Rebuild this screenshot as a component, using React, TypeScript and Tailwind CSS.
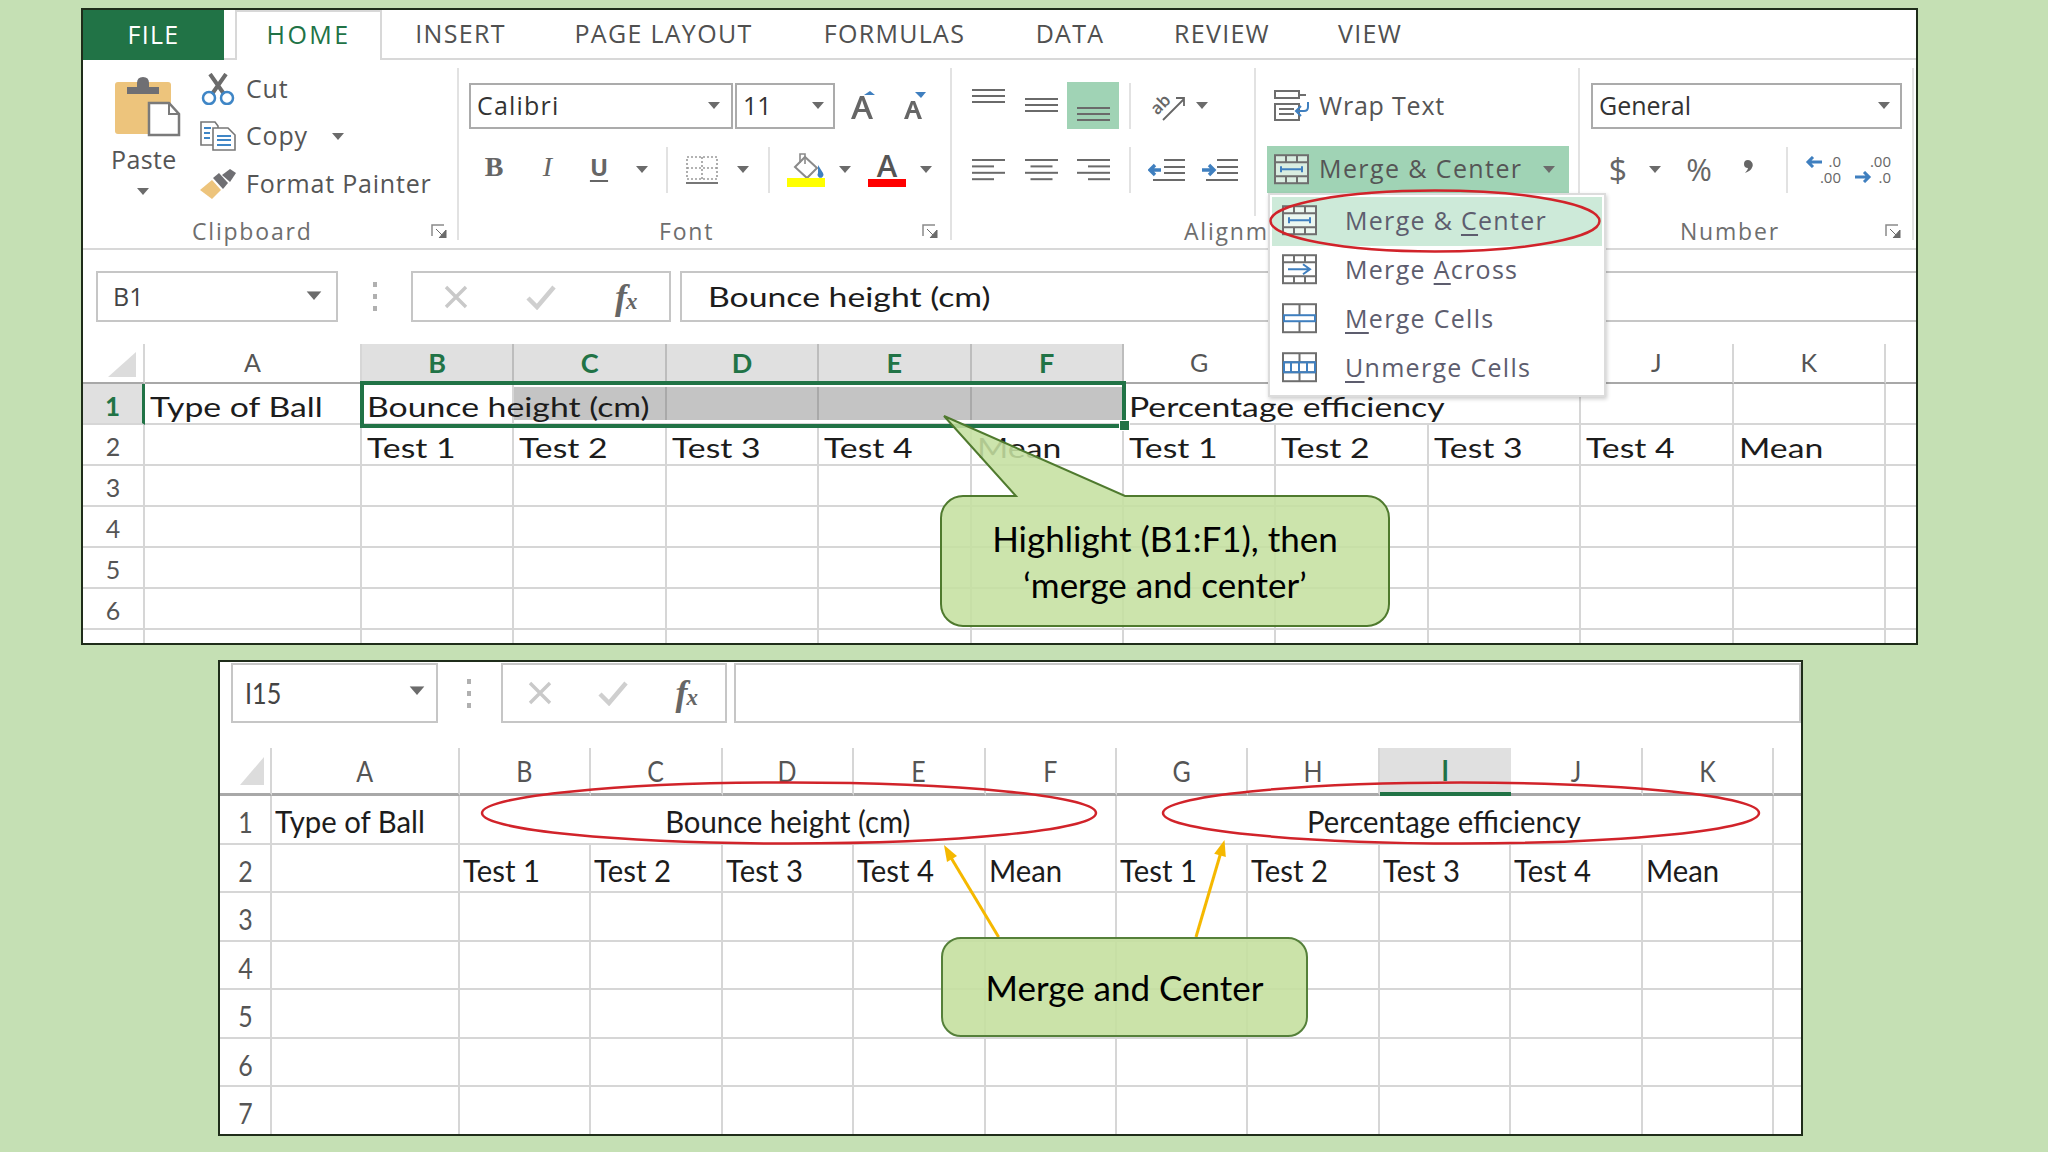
const COLS = ['A', 'B', 'C', 'D', 'E', 'F', 'G', 'H', 'I', 'J', 'K'];
const TESTS = ['Test 1', 'Test 2', 'Test 3', 'Test 4', 'Mean'];

function Caret({ className = '' }: { className?: string }) {
  return (
    <svg width="12" height="7" viewBox="0 0 12 7" className={className}>
      <path d="M0 0h12L6 7z" fill="#6b6b6b" />
    </svg>
  );
}

function Sep() {
  return <div className="w-[2px] h-[46px] bg-[#e2e2e2]" />;
}

function Launcher() {
  return (
    <svg width="16" height="14" viewBox="0 0 16 14">
      <path d="M1 12V1h12" fill="none" stroke="#8a8a8a" strokeWidth="1.5" />
      <path d="M5 5l6 6M15 6v8H8z" fill="#6b6b6b" stroke="#6b6b6b" />
    </svg>
  );
}

function Lines({ y, widths = [33, 33, 33], gap = 6 }: { y: number; widths?: number[]; gap?: number }) {
  return (
    <>
      {widths.map((w, i) => (
        <rect key={i} x={33 - w} y={y + i * gap} width={w} height="2" fill="#6a6a6a" />
      ))}
    </>
  );
}

function AlignLines({ mode }: { mode: 'left' | 'center' | 'right' }) {
  const rows = [33, 22, 33, 22];
  const x = (w: number) => (mode === 'left' ? 0 : mode === 'center' ? (33 - w) / 2 : 33 - w);
  return (
    <svg width="33" height="22" viewBox="0 0 33 22">
      {rows.map((w, i) => (
        <rect key={i} x={x(w)} y={i * 6.4} width={w} height="2" fill="#6a6a6a" />
      ))}
    </svg>
  );
}

function MergeIcon({ kind, size = 35 }: { kind: 'center' | 'across' | 'cells' | 'unmerge'; size?: number }) {
  const blue = '#3f7fbf';
  const gray = '#6e6e6e';
  return (
    <svg width={size} height={size * 0.87} viewBox="0 0 35 30" fill="none">
      <rect x="1" y="1" width="33" height="28" stroke={gray} strokeWidth="2" fill="#fff" fillOpacity="0.6" />
      {kind === 'center' || kind === 'across' ? (
        <>
          <path d="M1 8h33M1 22h33M12 1v7M23 1v7M12 22v7M23 22v7" stroke={gray} strokeWidth="2" />
          {kind === 'center' ? (
            <path d="M7 15h21M7 12v6M28 12v6" stroke={blue} strokeWidth="2" />
          ) : (
            <path d="M6 15h22M21 10l7 5-7 5" stroke={blue} strokeWidth="2" />
          )}
        </>
      ) : kind === 'cells' ? (
        <>
          <path d="M17.5 1v28" stroke={gray} strokeWidth="2" />
          <rect x="2" y="12" width="31" height="6" fill="#fff" stroke={blue} strokeWidth="2" />
        </>
      ) : (
        <>
          <path d="M1 10h33M1 20h33M17.5 1v9M17.5 20v9" stroke={gray} strokeWidth="2" />
          <path d="M2 10h31v10H2zM9 10v10M17 10v10M25 10v10" stroke={blue} strokeWidth="2" />
        </>
      )}
    </svg>
  );
}

function PasteIcon() {
  return (
    <svg width="66" height="62" viewBox="0 0 66 62">
      <rect x="0" y="7" width="56" height="52" rx="3" fill="#edc47c" />
      <path d="M12 19v-7h10V8q0-6 6-6t6 6v4h10v7z" fill="#6f6f73" />
      <path d="M34 28h20l10 11v21H34z" fill="#fff" stroke="#7a7a7a" strokeWidth="2.5" />
      <path d="M54 28v11h10" fill="none" stroke="#7a7a7a" strokeWidth="2" />
    </svg>
  );
}

function CutIcon() {
  return (
    <svg width="36" height="32" viewBox="0 0 36 32" fill="none">
      <path d="M10 1l14 20M26 1L12 21" stroke="#6b6b6b" strokeWidth="4" />
      <circle cx="9" cy="25" r="6" stroke="#3f86c6" strokeWidth="2.5" />
      <circle cx="27" cy="25" r="6" stroke="#3f86c6" strokeWidth="2.5" />
    </svg>
  );
}

function CopyIcon() {
  return (
    <svg width="36" height="30" viewBox="0 0 36 30" fill="none">
      <path d="M1 1h14l3 4v19H1z" fill="#fff" stroke="#777" strokeWidth="1.6" />
      <path d="M13 7h15l7 7v15H13z" fill="#fff" stroke="#777" strokeWidth="1.6" />
      <path d="M4 7h7M4 12h6M4 17h6M17 15h14M17 19h14M17 24h14" stroke="#3f86c6" strokeWidth="2" />
    </svg>
  );
}

function PainterIcon() {
  return (
    <svg width="38" height="30" viewBox="0 0 38 30">
      <path d="M0 21l12-10 9 10-9 9z" fill="#edc47c" />
      <path d="M13 9l6-5 9 10-5 6z" fill="#6f6f73" />
      <path d="M22 6l8-6 6 4-6 9z" fill="#6f6f73" />
    </svg>
  );
}

function WrapIcon() {
  return (
    <svg width="37" height="31" viewBox="0 0 37 31" fill="none">
      <path d="M1 1h24v7H1zM1 14h24v16H1z" stroke="#6e6e6e" strokeWidth="2" />
      <path d="M25 5h7M5 19h15M5 24h15" stroke="#6e6e6e" strokeWidth="2" />
      <path d="M34 12v5q0 4-4 4h-7M27 16l-5 5 5 5" stroke="#3f7fbf" strokeWidth="2" />
    </svg>
  );
}

function OrientIcon() {
  return (
    <svg width="38" height="30" viewBox="0 0 38 30" fill="none" className="overflow-visible">
      <text x="14" y="19" textAnchor="middle" transform="rotate(-45 14 14)" fontFamily="Open Sans, sans-serif" fontSize="17" fontWeight="600" fill="#666">
        ab
      </text>
      <path d="M16 29L37 8M29 7h8v8" stroke="#666" strokeWidth="1.8" />
    </svg>
  );
}

function IndentIcon({ more }: { more?: boolean }) {
  return (
    <svg width="38" height="24" viewBox="0 0 38 24" fill="none">
      <path d="M16 2h21M16 9h21M16 15h21M5 22h32" stroke="#6a6a6a" strokeWidth="2" />
      {more ? (
        <path d="M1 12h11M8 7l5 5-5 5" stroke="#3f7fbf" strokeWidth="3.4" />
      ) : (
        <path d="M13 12H2M7 7l-5 5 5 5" stroke="#3f7fbf" strokeWidth="3.4" />
      )}
    </svg>
  );
}

function DecimalIcon({ more }: { more?: boolean }) {
  return (
    <div className="relative w-[36px] h-[31px] text-[#666] text-[15px] leading-[15px] font-['Open_Sans',sans-serif]">
      <span className="absolute right-0 top-0">{more ? '.00' : '.0'}</span>
      <span className="absolute right-0 bottom-0">{more ? '.0' : '.00'}</span>
      <svg width="17" height="12" viewBox="0 0 17 12" fill="none" className={more ? 'absolute left-0 bottom-[2px]' : 'absolute left-0 top-[2px]'}>
        {more ? (
          <path d="M0 6h14M9 1l5 5-5 5" stroke="#3f7fbf" strokeWidth="3" />
        ) : (
          <path d="M17 6H3M8 1L3 6l5 5" stroke="#3f7fbf" strokeWidth="3" />
        )}
      </svg>
    </div>
  );
}

function FormulaGlyphs({ widths }: { widths: string[] }) {
  return (
    <>
      <div className={`${widths[0]} flex justify-center`}>
        <svg width="24" height="24" viewBox="0 0 24 24" fill="none">
          <path d="M2 2l20 20M22 2L2 22" stroke="#c9c9c9" strokeWidth="3.4" />
        </svg>
      </div>
      <div className={`${widths[1]} flex justify-center`}>
        <svg width="30" height="26" viewBox="0 0 30 26" fill="none">
          <path d="M2 14l9 9L28 3" stroke="#cfcfcf" strokeWidth="4.5" />
        </svg>
      </div>
      <div className={`${widths[2]} flex justify-center items-baseline font-['Liberation_Serif',serif] italic font-bold text-[#666] leading-none`}>
        <span className="text-[36px]">f</span>
        <span className="text-[23px] -ml-[1px]">x</span>
      </div>
    </>
  );
}

function Dots() {
  return (
    <div className="flex flex-col gap-[7px]">
      <div className="w-[4px] h-[5px] bg-[#b0b0b0]" />
      <div className="w-[4px] h-[5px] bg-[#b0b0b0]" />
      <div className="w-[4px] h-[5px] bg-[#b0b0b0]" />
    </div>
  );
}

function GroupLabel({ name, left, launcherRight }: { name: string; left: string; launcherRight?: string }) {
  return (
    <div className="mt-auto h-[18px] flex items-center">
      <span className={`${left} text-[23px] leading-[18px] tracking-[1.8px] text-[#6e6e6e] whitespace-nowrap`}>{name}</span>
      {launcherRight && (
        <div className={`ml-auto ${launcherRight}`}>
          <Launcher />
        </div>
      )}
    </div>
  );
}

function Ribbon() {
  return (
    <div className="flex h-[190px] border-b-2 border-[#d8d8d8] py-[8px]">
      <div className="w-[376px] border-r-2 border-[#e2e2e2] flex flex-col">
        <div className="flex">
          <div className="w-[117px] pl-[32px] pt-[7px] flex flex-col">
            <PasteIcon />
            <span className="text-[25px] leading-[30px] mt-[7px] -ml-[4px] tracking-[0.4px] text-[#555]">Paste</span>
            <Caret className="mt-[14px] ml-[22px]" />
          </div>
          <div className="flex flex-col -mt-[3px] text-[25px] tracking-[0.8px] text-[#555]">
            <div className="h-[47px] flex items-center">
              <div className="w-[46px]"><CutIcon /></div>
              <span>Cut</span>
            </div>
            <div className="h-[48px] flex items-center">
              <div className="w-[46px]"><CopyIcon /></div>
              <span>Copy</span>
              <Caret className="ml-[24px]" />
            </div>
            <div className="h-[47px] flex items-center">
              <div className="w-[46px]"><PainterIcon /></div>
              <span className="whitespace-nowrap">Format Painter</span>
            </div>
          </div>
        </div>
        <GroupLabel name="Clipboard" left="ml-[109px]" launcherRight="mr-[10px]" />
      </div>

      <div className="w-[493px] border-r-2 border-[#e2e2e2] flex flex-col pl-[10px] pt-[14px]">
        <div className="flex items-center h-[47px]">
          <div className="w-[264px] h-[46px] border-2 border-[#ababab] flex items-center pl-[6px] pr-[11px] justify-between text-[25px] tracking-[1.2px] text-[#333]">
            <span>Calibri</span>
            <Caret />
          </div>
          <div className="ml-[2px] w-[100px] h-[46px] border-2 border-[#ababab] flex items-center pl-[6px] pr-[9px] justify-between text-[25px] text-[#333]">
            <span>11</span>
            <Caret />
          </div>
          <svg width="24" height="30" viewBox="0 0 24 30" className="ml-[16px]">
            <path d="M0 28L9 5h4l9 23h-4l-3-7H7l-3 7zM8 18h6l-3-9z" fill="#666" fillRule="evenodd" />
            <path d="M13 4l6-4 5 4z" fill="#3f7fbf" />
          </svg>
          <svg width="22" height="28" viewBox="0 0 22 28" className="ml-[29px]">
            <path d="M0 27L7 9h4l7 18h-4l-2-6H6l-2 6zM7 18h4L9 12z" fill="#666" fillRule="evenodd" />
            <path d="M11 0h11l-5 6z" fill="#3f7fbf" />
          </svg>
        </div>
        <div className="flex items-center h-[47px] mt-[17px] text-[#666]">
          <div className="w-[50px] -mt-[5px] flex justify-center font-['Liberation_Serif',serif] font-bold text-[28px]">B</div>
          <div className="w-[51px] ml-[3px] -mt-[5px] flex justify-center font-['Liberation_Serif',serif] italic text-[28px]">I</div>
          <div className="w-[48px] ml-[2px] -mt-[5px] flex justify-center font-['Open_Sans',sans-serif] font-bold text-[24px] underline underline-offset-4">U</div>
          <div className="w-[38px] flex justify-center"><Caret /></div>
          <div className="w-[12px] flex justify-center"><Sep /></div>
          <div className="w-[58px] flex justify-center">
            <svg width="32" height="28" viewBox="0 0 32 28" fill="none">
              <path d="M1 1h30v22H1zM16 1v22M1 12h30" stroke="#9a9a9a" strokeWidth="1.6" strokeDasharray="2 2" />
              <path d="M0 27h32" stroke="#777" strokeWidth="2" />
            </svg>
          </div>
          <div className="w-[24px] flex justify-center"><Caret /></div>
          <div className="w-[28px] flex justify-center"><Sep /></div>
          <div className="w-[46px] flex justify-center">
            <svg width="38" height="34" viewBox="0 0 38 34" fill="none">
              <path d="M8 14L18 4l12 11-10 10z" stroke="#8a8a8a" strokeWidth="2" />
              <path d="M13 10V1h5v10" stroke="#8a8a8a" strokeWidth="1.6" />
              <path d="M31 12l5 8a3 3 0 1 1-5 0z" fill="#3f7fbf" />
              <rect x="0" y="25" width="38" height="9" fill="#ffff00" />
            </svg>
          </div>
          <div className="w-[32px] flex justify-center"><Caret /></div>
          <div className="w-[52px] flex flex-col items-center">
            <span className="text-[31px] leading-[27px] font-semibold text-[#555]">A</span>
            <div className="w-[38px] h-[8px] bg-[#ff0000]" />
          </div>
          <div className="w-[26px] flex justify-center"><Caret /></div>
        </div>
        <GroupLabel name="Font" left="ml-[190px]" launcherRight="mr-[12px]" />
      </div>

      <div className="w-[628px] border-r-2 border-[#e2e2e2] flex flex-col">
        <div className="flex flex-1">
          <div className="w-[304px] border-r-2 border-[#e2e2e2] pl-[10px] pt-[14px] mb-[6px]">
            <div className="flex items-center h-[47px]">
              <div className="w-[53px] flex justify-center self-start pt-[7px]">
                <svg width="33" height="15"><Lines y={0} /></svg>
              </div>
              <div className="w-[52px] flex justify-center">
                <svg width="33" height="15"><Lines y={0} /></svg>
              </div>
              <div className="w-[52px] h-[47px] bg-[#a0d3b5] flex justify-center items-end pb-[7px]">
                <svg width="33" height="15"><Lines y={0} /></svg>
              </div>
              <div className="w-[22px] flex justify-center"><Sep /></div>
              <div className="w-[50px] flex justify-center"><OrientIcon /></div>
              <div className="w-[22px] flex justify-center"><Caret /></div>
            </div>
            <div className="flex items-center h-[47px] mt-[17px]">
              <div className="w-[53px] flex justify-center"><AlignLines mode="left" /></div>
              <div className="w-[52px] flex justify-center"><AlignLines mode="center" /></div>
              <div className="w-[52px] flex justify-center"><AlignLines mode="right" /></div>
              <div className="w-[22px] flex justify-center"><Sep /></div>
              <div className="w-[52px] flex justify-center"><IndentIcon /></div>
              <div className="w-[54px] flex justify-center"><IndentIcon more /></div>
            </div>
          </div>
          <div className="pt-[14px] text-[25px] text-[#555]">
            <div className="flex items-center h-[47px] pl-[18px]">
              <WrapIcon />
              <span className="ml-[8px] tracking-[0.8px] whitespace-nowrap">Wrap Text</span>
            </div>
            <div className="ml-[11px] mt-[17px] w-[302px] h-[47px] bg-[#a0d3b5] flex items-center pl-[7px]">
              <MergeIcon kind="center" />
              <span className="ml-[10px] -mt-[2px] tracking-[1.4px] whitespace-nowrap">Merge &amp; Center</span>
              <Caret className="ml-[21px]" />
            </div>
          </div>
        </div>
        <GroupLabel name="Alignment" left="ml-[232px]" />
      </div>

      <div className="w-[334px] border-r-2 border-[#e2e2e2] flex flex-col pl-[11px] pt-[14px]">
        <div className="h-[47px] flex items-center">
          <div className="w-[311px] h-[46px] border-2 border-[#ababab] flex items-center pl-[6px] pr-[10px] justify-between text-[25px] text-[#333]">
            <span>General</span>
            <Caret />
          </div>
        </div>
        <div className="flex items-center h-[47px] mt-[17px] text-[#666]">
          <div className="w-[54px] flex justify-center text-[32px] leading-none">$</div>
          <div className="w-[20px] flex justify-center"><Caret /></div>
          <div className="w-[68px] flex justify-center text-[31px] leading-none">%</div>
          <div className="w-[30px] flex justify-center -mt-[6px]">
            <svg width="10" height="13" viewBox="0 0 10 13">
              <path d="M5 0a5 5 0 0 1 4.5 6.5Q8 11 2 13q3-3 3-5a4 4 0 0 1 0-8z" fill="#666" />
            </svg>
          </div>
          <div className="w-[37px] flex justify-end pr-[12px]"><Sep /></div>
          <div className="w-[46px] flex justify-center"><DecimalIcon /></div>
          <div className="w-[54px] flex justify-center"><DecimalIcon more /></div>
        </div>
        <GroupLabel name="Number" left="ml-[89px]" launcherRight="mr-[11px]" />
      </div>
    </div>
  );
}

function MergeMenu() {
  return (
    <div className="absolute left-[1185px] top-[183px] w-[338px] h-[204px] bg-white border-2 border-[#dcdcdc] shadow-[1px_2px_4px_rgba(0,0,0,0.2)] pt-[2px] px-[2px] text-[25px] tracking-[1.3px] text-[#5d5d6e]">
      <div className="h-[49px] bg-[#cdead9] flex items-center pl-[10px] pb-[2px]">
        <MergeIcon kind="center" />
        <span className="ml-[28px] whitespace-nowrap">Merge &amp; <span className="underline underline-offset-4">C</span>enter</span>
      </div>
      <div className="h-[49px] flex items-center pl-[10px] pb-[2px]">
        <MergeIcon kind="across" />
        <span className="ml-[28px] whitespace-nowrap">Merge <span className="underline underline-offset-4">A</span>cross</span>
      </div>
      <div className="h-[49px] flex items-center pl-[10px] pb-[2px]">
        <MergeIcon kind="cells" />
        <span className="ml-[28px] whitespace-nowrap"><span className="underline underline-offset-4">M</span>erge Cells</span>
      </div>
      <div className="h-[49px] flex items-center pl-[10px] pb-[2px]">
        <MergeIcon kind="unmerge" />
        <span className="ml-[28px] whitespace-nowrap"><span className="underline underline-offset-4">U</span>nmerge Cells</span>
      </div>
    </div>
  );
}

function TopCell({ children, className = '' }: { children?: React.ReactNode; className?: string }) {
  return <div className={`border-r-2 border-b-2 border-[#d6d6d6] flex items-center pt-[5px] ${className}`}>{children}</div>;
}

function TopText({ children }: { children: React.ReactNode }) {
  return (
    <span className="inline-block pl-[4px] origin-left scale-x-[1.25] whitespace-nowrap text-[27px] leading-none text-[#1c1c1c] font-['Lato',sans-serif]">
      {children}
    </span>
  );
}

function TopSheet() {
  const selected = (c: string) => 'BCDEF'.includes(c);
  // H and I sit behind the open merge menu
  const hidden = (c: string) => 'HI'.includes(c);
  return (
    <div className="mt-[22px] grid grid-cols-[62px_217px_repeat(10,152.4px)_1fr] grid-rows-[40px_repeat(7,41px)] font-['Lato',sans-serif]">
      <div className="border-r-2 border-b-2 border-b-[#a8a8a8] border-r-[#d6d6d6] flex justify-end items-end pr-[7px] pb-[5px]">
        <svg width="28" height="25"><path d="M28 0v25H0z" fill="#dcdcdc" /></svg>
      </div>
      {COLS.map((c) => (
        <div
          key={c}
          className={
            selected(c)
              ? 'border-r-2 border-b-2 border-r-[#bdbdbd] border-b-[#a8a8a8] bg-[#e0e0e0] flex items-center justify-center text-[27px] font-bold text-[#217346]'
              : 'border-r-2 border-b-2 border-r-[#d6d6d6] border-b-[#a8a8a8] flex items-center justify-center text-[25px] text-[#555]'
          }
        >
          {hidden(c) ? '' : c}
        </div>
      ))}
      <div className="border-b-2 border-[#a8a8a8]" />

      <div className="border-b-2 border-[#d6d6d6] bg-[#e0e0e0] border-r-[3px] border-r-[#217346] flex items-center justify-center pt-[5px] text-[26px] font-bold text-[#217346]">1</div>
      <TopCell><TopText>Type of Ball</TopText></TopCell>
      <TopCell className="relative z-10"><TopText>Bounce height (cm)</TopText></TopCell>
      {['C', 'D', 'E', 'F'].map((c) => (
        <div key={c} className="border-b-2 border-[#d6d6d6] pt-[3px] pb-[3px]">
          <div className="h-full bg-[#c4c4c4] border-r-2 border-[#a9a9a9]" />
        </div>
      ))}
      <div className="col-span-3 border-r-2 border-b-2 border-[#d6d6d6] flex items-center pt-[5px]"><TopText>Percentage efficiency</TopText></div>
      <TopCell />
      <TopCell />
      <div className="border-b-2 border-[#d6d6d6]" />

      <TopCell className="justify-center text-[25px] text-[#555]">2</TopCell>
      <TopCell />
      {[...TESTS, ...TESTS].map((t, i) => (
        <TopCell key={i}><TopText>{t}</TopText></TopCell>
      ))}
      <div className="border-b-2 border-[#d6d6d6]" />

      {[3, 4, 5, 6, 7].map((r) => (
        <div key={r} className="contents">
          <TopCell className="justify-center text-[25px] text-[#555]">{r === 7 ? '' : r}</TopCell>
          {COLS.map((c) => (
            <TopCell key={c} />
          ))}
          <div className="border-b-2 border-[#d6d6d6]" />
        </div>
      ))}
    </div>
  );
}

function TopPanel() {
  const tabs = [
    { name: 'INSERT', w: 'w-[157px]' },
    { name: 'PAGE LAYOUT', w: 'w-[249px]' },
    { name: 'FORMULAS', w: 'w-[213px]' },
    { name: 'DATA', w: 'w-[138px]' },
    { name: 'REVIEW', w: 'w-[166px]' },
    { name: 'VIEW', w: 'w-[130px]' },
  ];
  return (
    <div className="ml-[81px] w-[1837px] h-[637px] border-2 border-[#1f2d1a] bg-white relative overflow-hidden shrink-0 font-['Open_Sans',sans-serif]">
      <div className="flex h-[50px] border-b-2 border-[#d8d8d8] text-[25px] tracking-[1.3px] text-[#505050]">
        <div className="w-[141px] h-[50px] bg-[#217346] text-white flex items-center justify-center">FILE</div>
        <div className="ml-[11px] w-[147px] h-[50px] pb-[2px] bg-white border-x-2 border-t-2 border-[#d8d8d8] text-[#217346] flex items-center justify-center tracking-[2.4px]">HOME</div>
        {tabs.map((t) => (
          <div key={t.name} className={`${t.w} flex items-center justify-center whitespace-nowrap`}>{t.name}</div>
        ))}
      </div>
      <Ribbon />
      <div className="mt-[21px] h-[51px] flex pl-[13px] items-stretch">
        <div className="w-[242px] border-2 border-[#c6c6c6] flex items-center pl-[15px] pr-[16px] justify-between text-[25px] text-[#444]">
          <span>B1</span>
          <Caret className="scale-125 -mt-[3px]" />
        </div>
        <div className="w-[73px] flex items-center justify-center"><Dots /></div>
        <div className="w-[260px] border-2 border-[#c6c6c6] flex items-center">
          <FormulaGlyphs widths={['w-[86px]', 'w-[86px]', 'w-[86px]']} />
        </div>
        <div className="ml-[9px] flex-1 border-y-2 border-l-2 border-[#c6c6c6] flex items-center pl-[21px]">
          <TopText>Bounce height (cm)</TopText>
        </div>
      </div>
      <TopSheet />

      {/* selection box over B1:F1 */}
      <div className="absolute left-[277px] top-[371px] w-[766px] h-[47px] border-[4px] border-[#217346] pointer-events-none z-20" />
      <div className="absolute left-[1036px] top-[410px] w-[11px] h-[11px] bg-[#217346] border border-white z-20" />

      {/* callout */}
      <svg width="452" height="214" viewBox="0 0 452 214" className="absolute left-[857px] top-[405px] z-30">
        <path
          d="M4 1L185 81H427a22 22 0 0 1 22 22V189a22 22 0 0 1-22 22H23a22 22 0 0 1-22-22V103a22 22 0 0 1 22-22H76Z"
          fill="#c5e0a0"
          fillOpacity="0.88"
          stroke="#4f7a2e"
          strokeWidth="2"
        />
      </svg>
      <div className="absolute left-[858px] top-[496px] w-[448px] h-[110px] z-30 flex flex-col items-center justify-center font-['Lato',sans-serif] text-[35px] leading-[46px] text-black">
        <span>Highlight (B1:F1), then</span>
        <span>‘merge and center’</span>
      </div>

      <MergeMenu />
      <svg width="334" height="66" className="absolute left-[1185px] top-[178px] z-40">
        <ellipse cx="167" cy="33" rx="164.5" ry="30.5" fill="none" stroke="#d1232a" strokeWidth="2.5" />
      </svg>
    </div>
  );
}

function BotText({ children }: { children: React.ReactNode }) {
  return (
    <span className="inline-block origin-center scale-x-[0.945] whitespace-nowrap text-[31px] leading-none text-[#1c1c1c]">
      {children}
    </span>
  );
}

function BotCell({ children, className = '' }: { children?: React.ReactNode; className?: string }) {
  return <div className={`border-r-2 border-b-2 border-[#d6d6d6] flex items-center pt-[5px] ${className}`}>{children}</div>;
}

function BottomPanel() {
  return (
    <div className="mt-[15px] ml-[218px] w-[1585px] h-[476px] border-2 border-[#1f2d1a] bg-white relative overflow-hidden shrink-0 font-['Lato',sans-serif]">
      <div className="pt-[1px] h-[61px] flex pl-[11px] items-stretch">
        <div className="w-[207px] border-2 border-[#c6c6c6] flex items-center pl-[12px] pr-[13px] justify-between text-[28px] text-[#444]">
          <span className="scale-x-[0.9] origin-left">I15</span>
          <Caret className="scale-125 -mt-[6px]" />
        </div>
        <div className="w-[63px] flex items-center justify-center"><Dots /></div>
        <div className="w-[226px] border-2 border-[#c6c6c6] flex items-center">
          <FormulaGlyphs widths={['w-[75px]', 'w-[71px]', 'w-[76px]']} />
        </div>
        <div className="ml-[7px] w-[1068px] border-2 border-[#c6c6c6]" />
      </div>
      <div className="mt-[25px] grid grid-cols-[52px_188px_repeat(10,131.4px)_1fr] grid-rows-[48px_repeat(7,48.5px)]">
        <div className="border-r-2 border-b-[3px] border-r-[#d6d6d6] border-b-[#a8a8a8] flex justify-end items-end pr-[6px] pb-[8px]">
          <svg width="24" height="28"><path d="M24 0v28H0z" fill="#dcdcdc" /></svg>
        </div>
        {COLS.map((c) =>
          c === 'I' ? (
            <div key={c} className="border-b-[4px] border-[#217346] bg-[#e0e0e0] flex items-center justify-center text-[29px] font-bold text-[#217346]">
              <span className="scale-x-[0.86]">{c}</span>
            </div>
          ) : (
            <div key={c} className="border-r-2 border-b-[3px] border-r-[#d6d6d6] border-b-[#a8a8a8] flex items-center justify-center text-[29px] text-[#555]">
              <span className="scale-x-[0.86]">{c}</span>
            </div>
          ),
        )}
        <div className="border-b-[3px] border-[#a8a8a8]" />

        <BotCell className="justify-center text-[29px] text-[#555]"><span className="scale-x-[0.86]">1</span></BotCell>
        <BotCell className="pl-[3px]">
          <span className="inline-block origin-left scale-x-[0.945] whitespace-nowrap text-[31px] leading-none text-[#1c1c1c]">Type of Ball</span>
        </BotCell>
        <div className="col-span-5 border-r-2 border-b-2 border-[#d6d6d6] flex items-center justify-center pt-[5px]"><BotText>Bounce height (cm)</BotText></div>
        <div className="col-span-5 border-r-2 border-b-2 border-[#d6d6d6] flex items-center justify-center pt-[5px]"><BotText>Percentage efficiency</BotText></div>
        <div className="border-b-2 border-[#d6d6d6]" />

        <BotCell className="justify-center text-[29px] text-[#555]"><span className="scale-x-[0.86]">2</span></BotCell>
        <BotCell />
        {[...TESTS, ...TESTS].map((t, i) => (
          <BotCell key={i} className="pl-[3px]">
            <span className="inline-block origin-left scale-x-[0.945] whitespace-nowrap text-[31px] leading-none text-[#1c1c1c]">{t}</span>
          </BotCell>
        ))}
        <div className="border-b-2 border-[#d6d6d6]" />

        {[3, 4, 5, 6, 7].map((r) => (
          <div key={r} className="contents">
            <BotCell className="justify-center text-[29px] text-[#555]"><span className="scale-x-[0.86]">{r}</span></BotCell>
            {COLS.map((c) => (
              <BotCell key={c} />
            ))}
            <div className="border-b-2 border-[#d6d6d6]" />
          </div>
        ))}
      </div>

      {/* red rings round the merged headings */}
      <svg width="620" height="66" className="absolute left-[259px] top-[118px]">
        <ellipse cx="310" cy="33" rx="307" ry="30.5" fill="none" stroke="#d1232a" strokeWidth="2.5" />
      </svg>
      <svg width="602" height="66" className="absolute left-[940px] top-[118px]">
        <ellipse cx="301" cy="33" rx="298" ry="30.5" fill="none" stroke="#d1232a" strokeWidth="2.5" />
      </svg>

      {/* arrows */}
      <svg width="340" height="110" className="absolute left-[700px] top-[170px]">
        <path d="M78.6 105L30 24" stroke="#f5b800" strokeWidth="3" />
        <path d="M24 13L37 24 27 30z" fill="#f5b800" />
        <path d="M276 105L301 20" stroke="#f5b800" strokeWidth="3" />
        <path d="M304.5 8L305.8 25 294.2 21.7z" fill="#f5b800" />
      </svg>

      <div className="absolute left-[721px] top-[275px] w-[367px] h-[100px] bg-[#c5e0a0]/90 border-2 border-[#55803a] rounded-[20px] flex items-center justify-center text-[35px] text-black">
        Merge and Center
      </div>
    </div>
  );
}

export default function App() {
  return (
    <div className="w-[2048px] h-[1152px] bg-[#c5e0b4] overflow-hidden flex flex-col items-start pt-[8px]">
      <TopPanel />
      <BottomPanel />
    </div>
  );
}
